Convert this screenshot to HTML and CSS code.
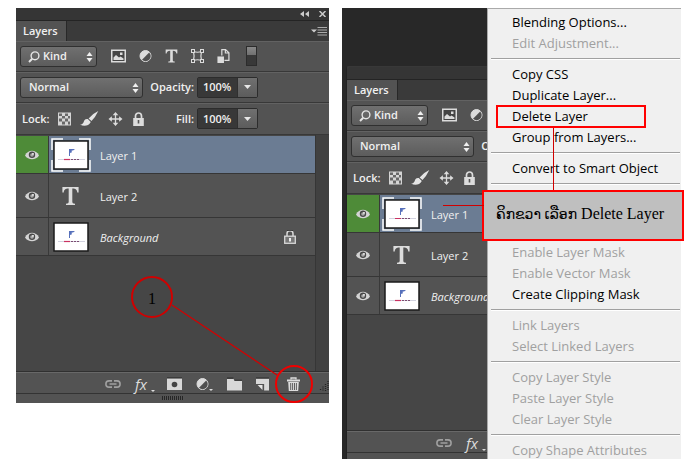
FILE: index.html
```
<!DOCTYPE html>
<html lang="lo">
<head>
<meta charset="utf-8">
<title>Delete Layer</title>
<link rel="stylesheet" href="styles.css">
</head>
<body>
<svg class="defs" aria-hidden="true">
  <symbol id="i-search" viewBox="0 0 12 12"><circle cx="7" cy="4.8" r="3.9" fill="none" stroke="#e4e4e4" stroke-width="1.4"/><path d="M4.2 7.8 1 11" stroke="#e4e4e4" stroke-width="2"/></symbol>
  <symbol id="i-updown" viewBox="0 0 7 10"><path d="M.5 4 3.5 0l3 4zM.5 6h6l-3 4z" fill="#f0f0f0"/></symbol>
  <symbol id="i-down" viewBox="0 0 7 4"><path d="M0 0h7L3.500 4z" fill="#e8e8e8"/></symbol>
  <symbol id="i-image" viewBox="0 0 15 13"><rect x=".75" y=".75" width="13.500" height="11.500" fill="#444" stroke="#dcdcdc" stroke-width="1.500"/><path d="M2.500 10.500V8L5 5.500 8 8l1.500-1 3 2v1.500z" fill="#dcdcdc"/><rect x="9" y="3" width="2.500" height="2.500" fill="#dcdcdc"/></symbol>
  <symbol id="i-half" viewBox="0 0 13 13"><circle cx="6.500" cy="6.500" r="5.500" fill="#dcdcdc" stroke="#dcdcdc"/><path d="M10.200 3A5 5 0 0 1 3 10.200z" fill="#505050"/></symbol>
  <symbol id="i-type" viewBox="0 0 20 20"><path d="M1 0h18v6h-1.500C17 3 16 1.800 12 1.800v14.700c0 1.500.8 2 3 2.100V20H5v-1.400c2.200-.1 3-.6 3-2.100V1.800C4 1.800 3 3 2.500 6H1z" fill="#dcdcdc"/></symbol>
  <symbol id="i-shape" viewBox="0 0 13 14"><path d="M2.500 2.500Q6.500 4 10.500 2.500Q9.300 7 10.500 11.500Q6.500 10 2.500 11.500Q3.700 7 2.500 2.500z" fill="none" stroke="#dcdcdc" stroke-width="1.200"/><g fill="#555" stroke="#dcdcdc"><rect x=".5" y=".5" width="3" height="3"/><rect x="9.500" y=".5" width="3" height="3"/><rect x=".5" y="10.500" width="3" height="3"/><rect x="9.500" y="10.500" width="3" height="3"/></g></symbol>
  <symbol id="i-smart" viewBox="0 0 13 15"><path d="M4.700 7V.7h4L12.300 4v8.300H7.500M8.500.7V4.300h3.800" fill="none" stroke="#dcdcdc" stroke-width="1.300"/><rect x="0" y="8" width="7" height="7" fill="#dcdcdc"/></symbol>
  <symbol id="i-checker" viewBox="0 0 13 13"><rect width="13" height="13" fill="#d4d4d4"/><path d="M1 1h3v2.500H1zM7 1h3v2.500H7zM4 3.500h3V6H4zM10 3.500h2V6h-2zM1 6h3v3H1zM7 6h3v3H7zM4 9h3v3H4zM10 9h2v3h-2z" fill="#686868"/></symbol>
  <symbol id="i-brush" viewBox="0 0 19 15"><path d="M18.300 0Q12 3 8.600 7.400l2.900 2.700Q15.500 6 18.300 0zM7.800 8C4.600 7.700 4.300 9.500 3.600 11.200 2.800 13 1.500 13.600 0 13.500c3.500 2 8.500 1.800 10.800-2.600z" fill="#e4e4e4"/></symbol>
  <symbol id="i-move" viewBox="0 0 15 15"><path d="M7.500 2v11M2 7.500h11" stroke="#dcdcdc" stroke-width="1.400"/><path d="m7.500 0 3 3.600h-6zM7.500 15l3-3.600h-6zM0 7.500l3.600-3v6zM15 7.500l-3.600-3v6z" fill="#dcdcdc"/></symbol>
  <symbol id="i-lock" viewBox="0 0 12 14"><path d="M3 7V4a3 3 0 0 1 6 0v3" fill="none" stroke="#dcdcdc" stroke-width="1.700"/><rect x=".7" y="6" width="10.600" height="8" fill="#dcdcdc"/><path d="M5.200 8h1.600v3.500H5.200z" fill="#555"/></symbol>
  <symbol id="i-lock-line" viewBox="0 0 12 14"><path d="M3 6V3.700a3 3 0 0 1 6 0V6" fill="none" stroke="#d8d8d8" stroke-width="1.500"/><path d="M3 .3h6" stroke="#222" stroke-width="1"/><rect x=".7" y="6.200" width="10.600" height="7.100" fill="#777" stroke="#d8d8d8" stroke-width="1.300"/><path d="M5 8h2v3.500H5z" fill="#eee"/></symbol>
  <symbol id="i-eye" viewBox="0 0 14 10"><path d="M0 5.500C3-.7 11-.7 14 5.500 11 10.500 3 10.500 0 5.500z" fill="#d4d4d4"/><circle cx="7" cy="4.800" r="3.200" fill="#484848"/><circle cx="7" cy="5" r="1.800" fill="#aaa"/><circle cx="8" cy="3.800" r=".9" fill="#fff"/></symbol>
  <symbol id="i-link" viewBox="0 0 16 8"><path d="M7 .9H4a3.100 3.100 0 0 0 0 6.200h3M9 .9h3a3.100 3.100 0 0 1 0 6.200H9M4.500 4h7" fill="none" stroke="#a0a0a0" stroke-width="1.600"/></symbol>
  <symbol id="i-mask" viewBox="0 0 15 12"><path d="M0 0h15v12H0z" fill="#d8d8d8"/><path d="M0 0h15" stroke="#252525"/><circle cx="7.500" cy="6.500" r="2.800" fill="#454545"/></symbol>
  <symbol id="i-folder" viewBox="0 0 14 12"><path d="M0 1h6l1 2h7v9H0z" fill="#d8d8d8"/><path d="M0 .5h6M7 2.500h7" stroke="#2c2c2c"/></symbol>
  <symbol id="i-new" viewBox="0 0 12 12"><path d="M0 1h12v11H7.500V6H0z" fill="#d8d8d8"/><path d="M0 .5h12" stroke="#2c2c2c"/><path d="M1.500 7H6v4.500z" fill="#e6e6e6"/></symbol>
  <symbol id="i-trash" viewBox="0 0 13 14"><path d="M4 2.500V1h5v1.500" fill="none" stroke="#ddd" stroke-width="1.300"/><path d="M0 2.500h13v2H0zM1.200 5h10.600l-.6 9H1.800z" fill="#ddd"/><path d="M3.700 6v7M5.600 6v7M7.500 6v7M9.400 6v7" stroke="#505050" stroke-width=".9"/></symbol>
  <symbol id="i-thumb" viewBox="0 0 36 30"><path d="M1 1h34v28H1z" fill="#fff" stroke="#1b1b1b" stroke-width="1.500"/><path d="M16 9h6l-1.500 1.300-2 .4.500 1.500-2 .8-1 3z" fill="#5670bb"/><path d="M16.500 9v7" stroke="#5670bb"/><path d="M5 19.500h27" stroke="#d2d2df"/><path d="M11 19.500h6" stroke="#ca3262" stroke-width="1.200"/><path d="M18 19.500h9" stroke="#7b4b70" stroke-width="1.200" stroke-dasharray="2 1"/></symbol>
  <symbol id="i-frame" viewBox="0 0 40 34"><path d="M1 12V1h11M28 1h11v11M39 22v11H28M12 33H1V22" fill="none" stroke="#fff" stroke-width="1.500"/></symbol>
  <symbol id="i-arrows" viewBox="0 0 9 6"><path d="M4 0v6L0 3zM9 0v6L5 3z" fill="#ccc"/></symbol>
  <symbol id="i-close" viewBox="0 0 7 6"><path d="m.5 0 6 6M6.500 0l-6 6" stroke="#ccc" stroke-width="1.500"/></symbol>
  <symbol id="i-menu" viewBox="0 0 16 9"><path d="M0 2.500h6l-3 3z" fill="#ccc"/><path d="M6.500 .5H16M6.500 3H16M6.500 5.500H16M6.500 8H16" stroke="#aaa"/></symbol>
  <symbol id="i-resize" viewBox="0 0 10 10"><path d="M9 0v10M6.500 3v7M4 5.500V10M1.500 8v2" stroke="#222" stroke-width="1.300" stroke-dasharray="1 1"/></symbol>
</svg>

<main class="page">
  <figure class="shot">
    <section class="panel">
      <header class="titlebar">
        <button class="plain" aria-label="Collapse"><svg class="w9"><use href="#i-arrows"/></svg></button>
        <button class="plain" aria-label="Close"><svg class="w7"><use href="#i-close"/></svg></button>
      </header>
      <div class="tabs"><h2 class="tab">Layers</h2><button class="plain" aria-label="Panel menu"><svg class="w16"><use href="#i-menu"/></svg></button></div>
      <div class="bar filter">
        <span class="pick kind"><svg class="glass"><use href="#i-search"/></svg><select aria-label="Filter"><option>Kind</option></select><svg class="updown"><use href="#i-updown"/></svg></span>
        <span class="tools">
          <button class="plain" aria-label="Pixel layers"><svg class="w15"><use href="#i-image"/></svg></button>
          <button class="plain" aria-label="Adjustment layers"><svg class="w13"><use href="#i-half"/></svg></button>
          <button class="plain" aria-label="Type layers"><svg class="w13"><use href="#i-type"/></svg></button>
          <button class="plain" aria-label="Shape layers"><svg class="w13"><use href="#i-shape"/></svg></button>
          <button class="plain" aria-label="Smart objects"><svg class="w13"><use href="#i-smart"/></svg></button>
        </span>
        <button class="switch" aria-label="Filtering on or off"></button>
      </div>
      <div class="bar">
        <span class="pick mode"><select aria-label="Blend mode"><option>Normal</option></select><svg class="updown"><use href="#i-updown"/></svg></span>
        <label class="name" for="opacity">Opacity:</label>
        <span class="value"><input id="opacity" value="100%"><button aria-label="Opacity slider"><svg><use href="#i-down"/></svg></button></span>
      </div>
      <div class="bar lockbar">
        <span class="locks"><span>Lock:</span>
          <button class="plain" aria-label="Lock transparency"><svg class="w13"><use href="#i-checker"/></svg></button>
          <button class="plain" aria-label="Lock pixels"><svg class="w19"><use href="#i-brush"/></svg></button>
          <button class="plain" aria-label="Lock position"><svg class="w15"><use href="#i-move"/></svg></button>
          <button class="plain" aria-label="Lock all"><svg class="w13"><use href="#i-lock"/></svg></button>
        </span>
        <label class="name" for="fill">Fill:</label>
        <span class="value"><input id="fill" value="100%"><button aria-label="Fill slider"><svg><use href="#i-down"/></svg></button></span>
      </div>
      <div class="body">
        <ul class="layers">
          <li class="layer selected"><span class="eye"><svg><use href="#i-eye"/></svg></span><span class="thumb"><svg class="pic"><use href="#i-thumb"/></svg><svg class="frame"><use href="#i-frame"/></svg></span><span class="title">Layer 1</span></li>
          <li class="layer tall"><span class="eye"><svg><use href="#i-eye"/></svg></span><span class="thumb"><svg class="type"><use href="#i-type"/></svg></span><span class="title">Layer 2</span></li>
          <li class="layer"><span class="eye"><svg><use href="#i-eye"/></svg></span><span class="thumb"><svg class="pic"><use href="#i-thumb"/></svg></span><em class="title">Background</em><svg class="locked"><use href="#i-lock-line"/></svg></li>
        </ul>
        <div class="scroll"></div>
      </div>
      <footer class="actions">
        <button class="plain" aria-label="Link layers"><svg class="link"><use href="#i-link"/></svg></button>
        <button class="plain fx">fx<i></i></button>
        <button class="plain" aria-label="Add mask"><svg class="w15"><use href="#i-mask"/></svg></button>
        <button class="plain more" aria-label="New adjustment"><svg class="w13"><use href="#i-half"/></svg><i></i></button>
        <button class="plain" aria-label="New group"><svg class="w15"><use href="#i-folder"/></svg></button>
        <button class="plain" aria-label="New layer"><svg class="w13"><use href="#i-new"/></svg></button>
        <button class="plain ringed" aria-label="Delete layer"><svg class="w13"><use href="#i-trash"/></svg></button>
        <svg class="resize"><use href="#i-resize"/></svg>
      </footer>
      <div class="grip"></div>
    </section>
    <svg class="pointer" viewBox="0 0 105 70"><path d="M0 0 105 70" stroke="#d40000" stroke-width="1.200"/></svg>
    <span class="step">1</span>
  </figure>

  <figure class="shot dark">
    <section class="panel floating">
      <header class="titlebar"></header>
      <div class="tabs"><h2 class="tab">Layers</h2></div>
      <div class="bar filter">
        <span class="pick kind"><svg class="glass"><use href="#i-search"/></svg><select aria-label="Filter"><option>Kind</option></select><svg class="updown"><use href="#i-updown"/></svg></span>
        <span class="tools">
          <button class="plain" aria-label="Pixel layers"><svg class="w15"><use href="#i-image"/></svg></button>
          <button class="plain" aria-label="Adjustment layers"><svg class="w13"><use href="#i-half"/></svg></button>
        </span>
      </div>
      <div class="bar">
        <span class="pick mode"><select aria-label="Blend mode"><option>Normal</option></select><svg class="updown"><use href="#i-updown"/></svg></span>
        <span class="name">Opacity:</span>
      </div>
      <div class="bar lockbar">
        <span class="locks"><span>Lock:</span>
          <button class="plain" aria-label="Lock transparency"><svg class="w13"><use href="#i-checker"/></svg></button>
          <button class="plain" aria-label="Lock pixels"><svg class="w19"><use href="#i-brush"/></svg></button>
          <button class="plain" aria-label="Lock position"><svg class="w15"><use href="#i-move"/></svg></button>
          <button class="plain" aria-label="Lock all"><svg class="w13"><use href="#i-lock"/></svg></button>
        </span>
      </div>
      <div class="body">
        <ul class="layers">
          <li class="layer selected"><span class="eye"><svg><use href="#i-eye"/></svg></span><span class="thumb"><svg class="pic"><use href="#i-thumb"/></svg><svg class="frame"><use href="#i-frame"/></svg></span><span class="title">Layer 1</span></li>
          <li class="layer tall"><span class="eye"><svg><use href="#i-eye"/></svg></span><span class="thumb"><svg class="type"><use href="#i-type"/></svg></span><span class="title">Layer 2</span></li>
          <li class="layer"><span class="eye"><svg><use href="#i-eye"/></svg></span><span class="thumb"><svg class="pic"><use href="#i-thumb"/></svg></span><em class="title">Background</em></li>
        </ul>
      </div>
      <footer class="actions">
        <button class="plain" aria-label="Link layers"><svg class="link"><use href="#i-link"/></svg></button>
        <button class="plain fx">fx<i></i></button>
      </footer>
      <div class="grip short"></div>
    </section>
    <nav class="menu">
      <button>Blending Options...</button>
      <button disabled>Edit Adjustment...</button>
      <hr>
      <button>Copy CSS</button>
      <button>Duplicate Layer...</button>
      <button class="marked">Delete Layer</button>
      <button>Group from Layers...</button>
      <hr>
      <button>Convert to Smart Object</button>
      <hr>
      <div class="covered"></div>
      <button disabled>Enable Layer Mask</button>
      <button disabled>Enable Vector Mask</button>
      <button>Create Clipping Mask</button>
      <hr>
      <button disabled>Link Layers</button>
      <button disabled>Select Linked Layers</button>
      <hr>
      <button disabled>Copy Layer Style</button>
      <button disabled>Paste Layer Style</button>
      <button disabled>Clear Layer Style</button>
      <hr>
      <button disabled>Copy Shape Attributes</button>
    </nav>
    <figcaption class="callout"><span class="lao">ຄິກຂວາ ເລືອກ</span> Delete Layer</figcaption>
  </figure>
</main>
</body>
</html>
```
FILE: styles.css
```
*, *::before, *::after { box-sizing: border-box; }
body { margin: 0; background: #fff; font-family: "Open Sans", "Noto Sans", sans-serif; }
svg { display: block; overflow: visible; }
.defs { position: absolute; width: 0; height: 0; }
button, select, input { font: inherit; color: inherit; margin: 0; padding: 0; border: 0; border-radius: 0; }
.plain { background: none; display: block; }

.page {
  display: grid;
  grid-template-columns: 313fr 339fr;
  gap: 13px;
  align-items: start;
  padding: 8px 19px 8px 16px;
}
.shot { margin: 0; position: relative; min-width: 0; }
.dark { background: #282828; display: grid; grid-template-columns: minmax(0, 1fr) 194px; }

/* Panel */
.panel { background: #535353; color: #f0f0f0; font-size: 11px; line-height: 16px; white-space: nowrap; overflow: hidden; }
.floating { margin: 58px 0 0 4px; border-left: 1px solid #222; border-top: 1px solid #383838; border-radius: 3px 0 0 0; }
.titlebar { height: 13px; background: #353535; border-bottom: 1px solid #242424; display: flex; justify-content: flex-end; align-items: center; gap: 10px; padding-right: 3px; }
.tabs { height: 20px; background: #3a3a3a; display: flex; justify-content: space-between; align-items: center; padding-right: 2px; }
.tab { margin: 0; height: 20px; padding: 2px 8px 0 7px; font-size: 11px; font-weight: 600; line-height: 16px; background: #535353; border-right: 1px solid #282828; }
.bar { height: 31px; display: flex; align-items: center; padding-left: 4px; border-bottom: 1px solid #383838; box-shadow: inset 0 1px #626262; font-weight: 600; }
.lockbar { height: 32px; }

.w7 { width: 7px; height: 6px; }
.w9 { width: 9px; height: 6px; }
.w13 { width: 13px; height: 14px; }
.w15 { width: 15px; height: 14px; }
.w16 { width: 16px; height: 9px; }
.w19 { width: 19px; height: 15px; }

.pick { position: relative; flex: none; height: 21px; }
.pick select { appearance: none; width: 100%; height: 100%; padding-left: 8px; background: linear-gradient(#707070, #5c5c5c); border: 1px solid #303030; border-radius: 3px; }
.kind { width: 77px; }
.kind select { padding-left: 22px; }
.mode { width: 123px; }
.glass { position: absolute; left: 8px; top: 5px; width: 12px; height: 12px; }
.updown { position: absolute; right: 4px; top: 6px; width: 7px; height: 10px; }
.tools { display: flex; align-items: center; gap: 13px; padding-left: 14px; }
.switch { width: 11px; height: 20px; margin-left: 16px; border: 1px solid #2c2c2c; background: linear-gradient(#888, #707070 45%, #383838 45%); }
.name { width: 51px; text-align: right; flex: none; }
.locks { width: 123px; flex: none; display: flex; align-items: center; gap: 9px; padding-left: 2px; }
.value { display: flex; width: 61px; height: 21px; margin-left: 3px; border: 1px solid #2c2c2c; border-radius: 2px; }
.value input { width: 39px; padding-left: 5px; background: #383838; outline: 0; }
.value button { flex: 1; background: linear-gradient(#707070, #5c5c5c); border-left: 1px solid #303030; display: grid; place-items: center; }
.value svg { width: 7px; height: 4px; }

/* Layer list */
.body { display: flex; min-height: 237px; background: #464646; border-bottom: 1px solid #303030; }
.layers { flex: 1; min-width: 0; margin: 0; padding: 1px 0 0; list-style: none; }
.layer { display: flex; align-items: center; height: 38px; background: #535353; border-bottom: 1px solid #363636; }
.tall { height: 44px; }
.selected { background: #6b7c93; }
.eye { width: 33px; flex: none; align-self: stretch; display: flex; align-items: center; justify-content: center; border-right: 1px solid #393939; }
.eye svg { width: 14px; height: 10px; }
.selected .eye { background: #4e8b38; }
.thumb { position: relative; width: 51px; flex: none; display: flex; justify-content: center; padding-right: 8px; }
.pic { width: 36px; height: 30px; }
.frame { position: absolute; left: 2px; top: -2px; width: 40px; height: 34px; }
.type { width: 19px; height: 18px; }
.title { padding-top: 2px; }
.locked { width: 12px; height: 14px; margin: 0 19px 0 auto; }
.scroll { width: 14px; background: #414141; border-left: 1px solid #363636; }

.actions { position: relative; height: 22px; display: flex; align-items: center; gap: 14px; padding: 2px 0 0 89px; border-bottom: 1px solid #333; box-shadow: inset 0 1px #686868; }
.link { width: 16px; height: 8px; }
.fx, .more { position: relative; }
.fx { width: 18px; text-align: left; color: #ddd; font-size: 15px; line-height: 16px; font-style: italic; }
.fx i, .more i { position: absolute; right: 0; bottom: 0; border: 2px solid transparent; border-top-color: #ddd; border-bottom: 0; }
.fx i { right: -2px; }
.more { width: 17px; }
.ringed { position: relative; margin-left: 4px; }
.ringed::after { content: ""; position: absolute; left: -12px; top: -12px; width: 38px; height: 38px; border: 2px solid #f00000; border-radius: 50%; }
.resize { width: 10px; height: 10px; position: absolute; right: 0; bottom: 2px; }
.grip { height: 9px; background: repeating-linear-gradient(90deg, #262626 0 1px, #555 1px 2px) center 2px / 22px 4px no-repeat; }
.short { height: 6px; background: none; }

/* Annotations */
.step { position: absolute; left: 115px; bottom: 85px; width: 42px; height: 42px; border: 2px solid #d00000; border-radius: 50%; color: #000; font: 16px/42px "Liberation Serif", serif; text-align: center; }
.pointer { position: absolute; right: 52px; bottom: 28px; width: 105px; height: 70px; }

/* Context menu */
.menu { background: #f0f0f0; border-left: 1px solid #aaa; border-top: 1px solid #aaa; padding: 3px 1px 0 3px; overflow: hidden; }
.menu button { position: relative; display: block; width: 100%; height: 21px; padding-left: 21px; background: none; text-align: left; font-size: 13px; line-height: 21px; color: #000; white-space: nowrap; }
.menu button:disabled { color: #a0a0a0; }
.menu button:last-child { height: 18px; }
.menu hr { height: 2px; margin: 4px 0; border: 0; border-top: 1px solid #a0a0a0; background: #fff; }
.covered { height: 53px; }
.menu .marked::before { content: ""; position: absolute; left: 5px; top: -1px; width: 150px; height: 23px; border: 2px solid #f00; }
.menu .marked::after { content: ""; position: absolute; left: 62px; top: 22px; width: 1px; height: 64px; background: #d00000; z-index: 1; }
.callout { position: absolute; z-index: 2; right: -3px; top: 182px; width: 202px; height: 51px; padding-left: 12px; background: #bfbfbf; border: 2px solid #f00; color: #000; font: 16px/43px "Liberation Serif", "DejaVu Sans", serif; white-space: nowrap; }
.lao { font-size: 14px; }
.callout::before { content: ""; position: absolute; right: 100%; top: 13px; width: 41px; height: 1px; background: #d00000; }
```
